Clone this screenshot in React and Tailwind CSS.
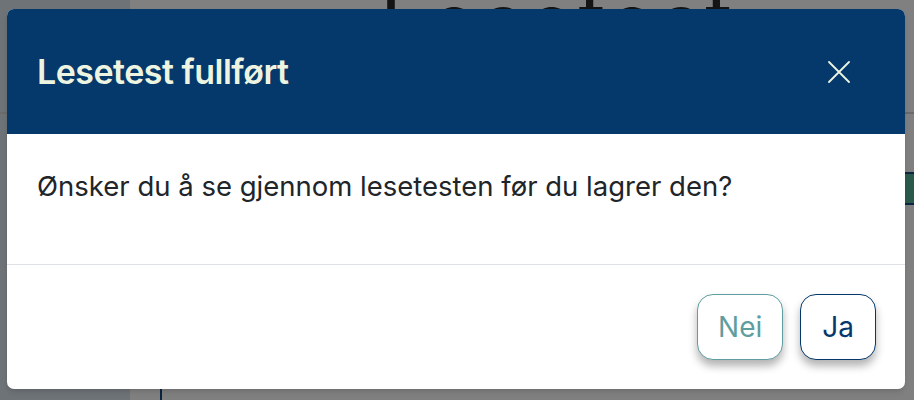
import React from "react";

export default function App() {
  return (
    <div className="relative h-[400px] w-[914px] overflow-hidden bg-[#808080]" style={{ fontFamily: "Inter, 'Noto Sans', sans-serif" }}>
      {/* background page (dimmed) */}
      <div className="flex h-full">
        <div className="w-[130px] shrink-0 bg-[#6e7378]" />
        <div className="relative flex-1">
          <div className="absolute left-[30px] top-[380px] h-[20px] w-[2px] bg-[#0b2540]" />
          <div className="absolute right-0 top-[172px] h-[33px] w-[20px] border-y-2 border-[#0b2540] bg-[#2a5a4b]" />
          <div className="absolute left-[250px] top-[-18px] text-[82px] font-normal leading-none tracking-[0.04em] text-[#141414]">Lesetest</div>
        </div>
      </div>
      <div className="absolute left-0 top-[112px] h-[2px] w-full bg-[#6b6b6b]" />

      {/* modal */}
      <div className="absolute left-[7px] top-[9px] flex w-[898px] flex-col overflow-hidden rounded-[7px] bg-white shadow-md">
        <div className="flex h-[125px] items-center justify-between bg-[#05386b] pl-[30px] pr-[55px]">
          <h1 className="text-[34px] font-semibold leading-none tracking-[-0.015em] text-[#edf5e1]">Lesetest fullført</h1>
          <svg width="22" height="22" viewBox="0 0 22 22" className="text-[#edf5e1]">
            <path d="M1 1L21 21M21 1L1 21" stroke="currentColor" strokeWidth="1.8" strokeLinecap="round" />
          </svg>
        </div>
        <div className="border-b border-[#dee2e6] px-[30px] pb-[59px] pt-[33px]">
          <p className="text-[27.5px] leading-[38px] text-[#212529]">Ønsker du å se gjennom lesetesten før du lagrer den?</p>
        </div>
        <div className="flex justify-end gap-[17px] px-[29px] py-[29px]">
          <button className="h-[66px] rounded-[16px] border border-[#5f9ea0] bg-white px-[20px] text-[28px] text-[#5f9ea0] shadow-[0_6px_8px_rgba(0,0,0,0.3)]">Nei</button>
          <button className="h-[66px] rounded-[16px] border border-[#05386b] bg-white px-[21px] text-[28px] text-[#05386b] shadow-[0_6px_8px_rgba(0,0,0,0.3)]">Ja</button>
        </div>
      </div>
    </div>
  );
}
